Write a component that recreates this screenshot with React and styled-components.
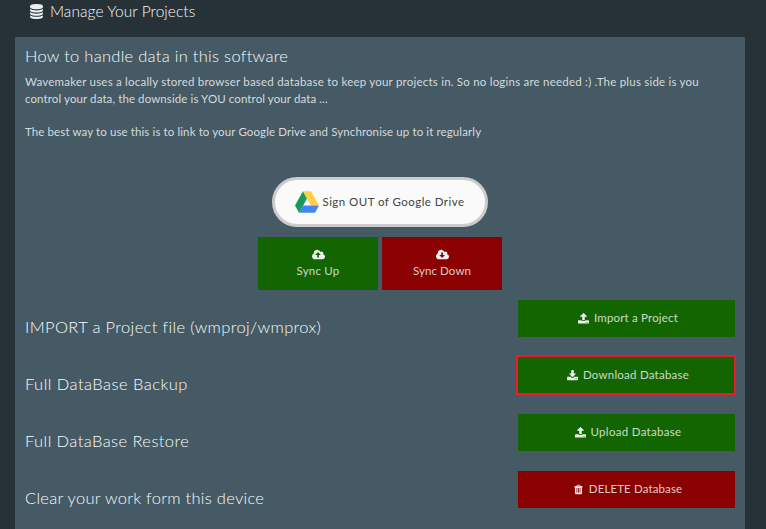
import React from "react";
import styled, { createGlobalStyle } from "styled-components";

const GlobalStyle = createGlobalStyle`
  * { box-sizing: border-box; }
  body {
    margin: 0;
    background: #263238;
    color: #eceff1;
    font-family: Lato, "Open Sans", sans-serif;
    font-size: 11.5px;
    overflow: hidden;
  }
`;

const Page = styled.div`
  display: flex;
  flex-direction: column;
  height: 529px;
  padding: 0 21px 0 15px;
`;

const Header = styled.header`
  display: flex;
  align-items: center;
  gap: 7px;
  height: 37px;
  padding: 0 0 15px 15px;
`;

const Title = styled.h1`
  margin: 0;
  color: #f6f8f9;
  font-size: 15.5px;
  font-weight: 300;
  line-height: 20px;
  letter-spacing: ${(p) => p.$spacing}px;
  white-space: nowrap;
`;

const Panel = styled.main`
  flex: 1;
  padding: 9px 10px 0;
  background: #455a64;
`;

const SectionTitle = styled.h2`
  margin: 0;
  color: #f8fafb;
  font-size: 16.5px;
  font-weight: 300;
  line-height: 20px;
  letter-spacing: ${(p) => p.$spacing}px;
  white-space: nowrap;
`;

const Intro = styled.div`
  height: 102px;
  margin-top: 8px;
  color: #d5dbde;
`;

const Line = styled.p`
  margin: 0 0 ${(p) => p.$after || 0}px;
  line-height: 16.6px;
  letter-spacing: ${(p) => p.$spacing}px;
  white-space: nowrap;
`;

const DriveArea = styled.section`
  display: flex;
  flex-direction: column;
  align-items: center;
  gap: 10px;
  margin-top: 1px;
`;

const DriveButton = styled.button`
  display: flex;
  align-items: center;
  justify-content: center;
  gap: 3px;
  width: 216px;
  height: 50px;
  padding: 0 0 1px;
  border: 3px solid #cccccc;
  border-radius: 25px;
  background: #fafafa;
  color: #444444;
  font: inherit;
`;

const SyncButtons = styled.div`
  display: flex;
  gap: 4px;
`;

const SyncButton = styled.button`
  display: flex;
  flex-direction: column;
  align-items: center;
  gap: 2px;
  width: 120px;
  height: 53px;
  padding: 12px 0 0;
  border: 0;
  background: ${(p) => (p.$danger ? "#8b0000" : "#126500")};
  color: #eceff1;
  font: inherit;
`;

const Actions = styled.section`
  display: grid;
  grid-auto-rows: 57px;
  margin-top: 10px;
`;

const ActionRow = styled.div`
  display: flex;
  justify-content: space-between;
  align-items: flex-start;
`;

const ActionTitle = styled(SectionTitle)`
  padding-top: 17px;
`;

const ActionButton = styled.button`
  position: relative;
  display: flex;
  align-items: center;
  justify-content: center;
  gap: ${(p) => p.$gap || 5}px;
  width: 217px;
  height: 37px;
  padding: 0 0 1px 3px;
  border: 0;
  background: ${(p) => (p.$danger ? "#8b0000" : "#126500")};
  color: #eceff1;
  font: inherit;
`;

const HighlightFrame = styled.span`
  position: absolute;
  inset: -2px -1px -1px -2px;
  border: 2px solid #f01830;
  pointer-events: none;
`;

const Label = styled.span`
  line-height: 16px;
  letter-spacing: ${(p) => p.$spacing}px;
  white-space: nowrap;
  opacity: ${(p) => (p.$soft ? 0.83 : 1)};
`;

const Glyph = styled.svg`
  display: block;
  flex: none;
  fill: currentColor;
`;

const dot = "q0-26-19-45t-45-19-45 19-19 45 19 45 45 19 45-19 19-45z";
const disk = "q237 0 443-43t325-127v170q0 69-103 128t-280 93.5-385 34.5-385-34.5-280-93.5-103-128v-170q119 84 325 127t443 43z";
const cloud =
  "m640 288q0 159-112.5 271.5t-271.5 112.5h-1088q-185 0-316.5-131.5t-131.5-316.5q0-130 70-240t188-165q-2-30-2-43 0-212 150-362t362-150q156 0 285.5 87t188.5 231q71-62 166-62 106 0 181 75t75 181q0 76-41 138 130 31 213.5 135.5t83.5 238.5z";

const PATHS = {
  database: `M896 768${disk}M896 1536${disk}M896 1152${disk}M896 0q208 0 385 34.5t280 93.5 103 128v128q0 69-103 128t-280 93.5-385 34.5-385-34.5-280-93.5-103-128v-128q0-69 103-128t280-93.5 385-34.5z`,
  cloudUp: `M1280 864q0-14-9-23l-352-352q-9-9-23-9t-23 9l-351 351q-10 12-10 24 0 14 9 23t23 9h224v352q0 13 9.5 22.5t22.5 9.5h192q13 0 22.5-9.5t9.5-22.5v-352h224q13 0 22.5-9.5t9.5-22.5z${cloud}`,
  cloudDown: `M1280 928q0-14-9-23t-23-9h-224v-352q0-13-9.5-22.5t-22.5-9.5h-192q-13 0-22.5 9.5t-9.5 22.5v352h-224q-13 0-22.5 9.5t-9.5 22.5q0 14 9 23l352 352q9 9 23 9t23-9l351-351q10-12 10-24zM1280 864${cloud}`,
  upload: `M1344 1472${dot}M1600 1472${dot}M1728 1248v320q0 40-28 68t-68 28h-1472q-40 0-68-28t-28-68v-320q0-40 28-68t68-28h427q21 56 70.5 92t110.5 36h256q61 0 110.5-36t70.5-92h427q40 0 68 28t28 68zm-325-648q-17 40-59 40h-256v448q0 26-19 45t-45 19h-256q-26 0-45-19t-19-45v-448h-256q-42 0-59-40-17-39 14-69l448-448q18-19 45-19t45 19l448 448q31 30 14 69z`,
  download: `M1344 1344${dot}M1600 1344${dot}M1728 1120v320q0 40-28 68t-68 28h-1472q-40 0-68-28t-28-68v-320q0-40 28-68t68-28h465l135 136q58 56 136 56t136-56l136-136h464q40 0 68 28t28 68zm-325-569q17 41-14 70l-448 448q-18 19-45 19t-45-19l-448-448q-31-29-14-70 17-39 59-39h256v-448q0-26 19-45t45-19h256q26 0 45 19t19 45v448h256q42 0 59 39z`,
  trash: "M704 1376v-704q0-14-9-23t-23-9h-64q-14 0-23 9t-9 23v704q0 14 9 23t23 9h64q14 0 23-9t9-23zm256 0v-704q0-14-9-23t-23-9h-64q-14 0-23 9t-9 23v704q0 14 9 23t23 9h64q14 0 23-9t9-23zm256 0v-704q0-14-9-23t-23-9h-64q-14 0-23 9t-9 23v704q0 14 9 23t23 9h64q14 0 23-9t9-23zm-544-992h448l-48-117q-7-9-17-11h-317q-10 2-17 11zm928 32v64q0 14-9 23t-23 9h-96v948q0 83-47 143.5t-113 60.5h-832q-66 0-113-58.5t-47-141.5v-952h-96q-14 0-23-9t-9-23v-64q0-14 9-23t23-9h309l70-167q15-37 54-63t79-26h320q40 0 79 26t54 63l70 167h309q14 0 23 9t9 23z",
};

const BOXES = {
  database: "128 0 1536 1792",
  cloudUp: "0 128 1920 1536",
  cloudDown: "0 128 1920 1536",
  upload: "64 64 1664 1664",
  download: "64 0 1664 1664",
  trash: "192 0 1408 1792",
};

const Icon = ({ name, width, height }) => (
  <Glyph viewBox={BOXES[name]} width={width} height={height} aria-hidden="true">
    <path d={PATHS[name]} fillRule="evenodd" />
  </Glyph>
);

const DriveLogo = () => (
  <Glyph viewBox="0 0 87.3 78" width="24" height="22" aria-hidden="true">
    <path fill="#169b57" d="M29.1 0 0 51.5 14.5 78 43.65 26.5z" />
    <path fill="#ffcf48" d="M29.1 0h29.1l29.1 51.5H58.2z" />
    <path fill="#4285f4" d="M29.1 51.5h58.2L72.8 78H14.5z" />
  </Glyph>
);

const ACTIONS = [
  { title: "IMPORT a Project file (wmproj/wmprox)", spacing: 0.355, label: "Import a Project", labelSpacing: 0.18, icon: "upload" },
  { title: "Full DataBase Backup", spacing: 0.465, label: "Download Database", labelSpacing: 0.23, icon: "download", highlighted: true },
  { title: "Full DataBase Restore", spacing: 0.42, label: "Upload Database", labelSpacing: 0.31, icon: "upload" },
  { title: "Clear your work form this device", spacing: 0.27, label: "DELETE Database", labelSpacing: 0.12, icon: "trash", danger: true },
];

export default function App() {
  return (
    <>
      <GlobalStyle />
      <Page>
        <Header>
          <Icon name="database" width={13} height={15} />
          <Title $spacing={0.06}>Manage Your Projects</Title>
        </Header>
        <Panel>
          <SectionTitle $spacing={0.28}>How to handle data in this software</SectionTitle>
          <Intro>
            <Line $spacing={0.217}>
              Wavemaker uses a locally stored browser based database to keep your projects in. So no logins are needed :) .The plus side is you
            </Line>
            <Line $spacing={0.1} $after={16.6}>
              control your data, the downside is YOU control your data ...
            </Line>
            <Line $spacing={0.11}>
              The best way to use this is to link to your Google Drive and Synchronise up to it regularly
            </Line>
          </Intro>
          <DriveArea>
            <DriveButton>
              <DriveLogo />
              <Label $spacing={0.46}>Sign OUT of Google Drive</Label>
            </DriveButton>
            <SyncButtons>
              <SyncButton>
                <Icon name="cloudUp" width={13} height={12} />
                <Label $soft $spacing={0.22}>Sync Up</Label>
              </SyncButton>
              <SyncButton $danger>
                <Icon name="cloudDown" width={13} height={12} />
                <Label $soft $spacing={0.08}>Sync Down</Label>
              </SyncButton>
            </SyncButtons>
          </DriveArea>
          <Actions>
            {ACTIONS.map((a) => (
              <ActionRow key={a.title}>
                <ActionTitle $spacing={a.spacing}>{a.title}</ActionTitle>
                <ActionButton $danger={a.danger} $gap={a.danger ? 6 : 5}>
                  <Icon name={a.icon} width={a.danger ? 9 : 11} height={11} />
                  <Label $soft $spacing={a.labelSpacing}>{a.label}</Label>
                  {a.highlighted && <HighlightFrame />}
                </ActionButton>
              </ActionRow>
            ))}
          </Actions>
        </Panel>
      </Page>
    </>
  );
}
